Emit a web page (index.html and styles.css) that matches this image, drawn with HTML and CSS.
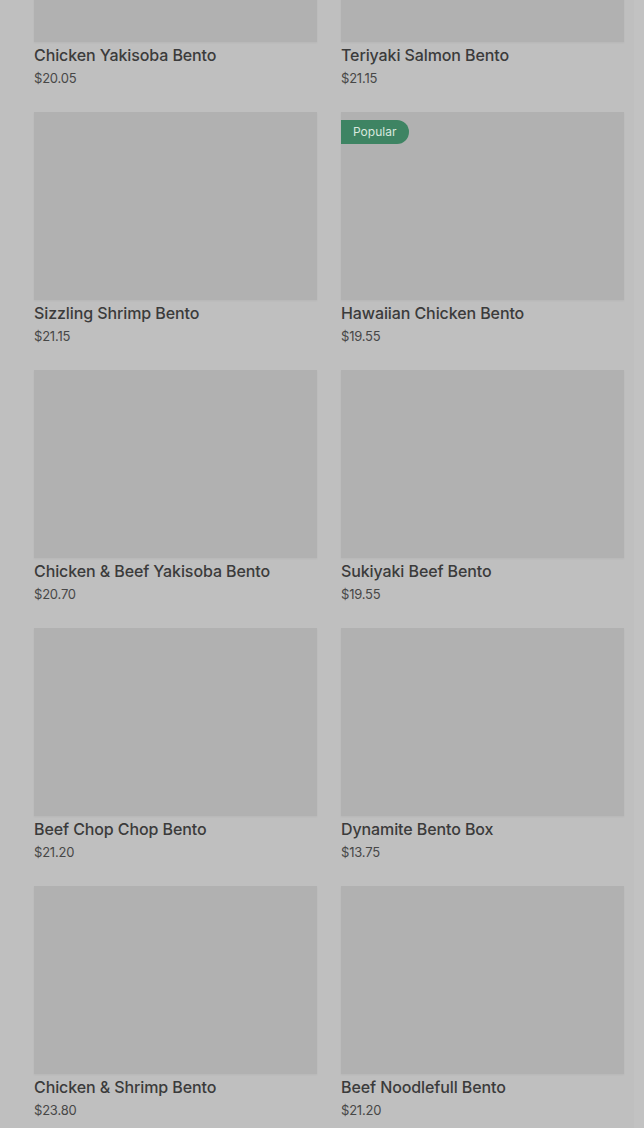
FILE: index.html
```html
<!DOCTYPE html>
<html lang="en">
<head>
  <meta charset="UTF-8">
  <meta name="viewport" content="width=device-width, initial-scale=1.0">
  <title>Bento Menu</title>
  <link rel="stylesheet" href="styles.css">
</head>
<body>
  <div class="overlay">
    <div class="menu-grid">
      <div class="item">
        <div class="thumb"></div>
        <div class="name">Chicken Yakisoba Bento</div>
        <div class="price">$20.05</div>
      </div>
      <div class="item">
        <div class="thumb"></div>
        <div class="name">Teriyaki Salmon Bento</div>
        <div class="price">$21.15</div>
      </div>
      <div class="item">
        <div class="thumb"></div>
        <div class="name">Sizzling Shrimp Bento</div>
        <div class="price">$21.15</div>
      </div>
      <div class="item">
        <div class="thumb"><span class="badge">Popular</span></div>
        <div class="name">Hawaiian Chicken Bento</div>
        <div class="price">$19.55</div>
      </div>
      <div class="item">
        <div class="thumb"></div>
        <div class="name">Chicken &amp; Beef Yakisoba Bento</div>
        <div class="price">$20.70</div>
      </div>
      <div class="item">
        <div class="thumb"></div>
        <div class="name">Sukiyaki Beef Bento</div>
        <div class="price">$19.55</div>
      </div>
      <div class="item">
        <div class="thumb"></div>
        <div class="name">Beef Chop Chop Bento</div>
        <div class="price">$21.20</div>
      </div>
      <div class="item">
        <div class="thumb"></div>
        <div class="name">Dynamite Bento Box</div>
        <div class="price">$13.75</div>
      </div>
      <div class="item">
        <div class="thumb"></div>
        <div class="name">Chicken &amp; Shrimp Bento</div>
        <div class="price">$23.80</div>
      </div>
      <div class="item">
        <div class="thumb"></div>
        <div class="name">Beef Noodlefull Bento</div>
        <div class="price">$21.20</div>
      </div>
    </div>
  </div>
</body>
</html>
```

FILE: styles.css
```css
html, body {
  margin: 0;
  padding: 0;
  background-color: #c2c2c2;
  font-family: Inter, Roboto, "Liberation Sans", sans-serif;
  overflow: hidden;
}
.overlay {
  width: 634px;
  height: 1128px;
  overflow: hidden;
  background-color: #bfbfbf;
}
.menu-grid {
  display: grid;
  grid-template-columns: 283px 283px;
  column-gap: 24px;
  row-gap: 25px;
  padding-left: 34px;
  margin-top: -146px;
}
.item {
  display: flex;
  flex-direction: column;
}
.thumb {
  position: relative;
  height: 188px;
  background-color: #b1b1b1;
  box-shadow: 0 1px 2px rgba(0, 0, 0, 0.05);
}
.badge {
  position: absolute;
  top: 8px;
  left: 0;
  height: 24px;
  line-height: 24px;
  padding: 0 13px 0 12px;
  background-color: #3e8463;
  color: #d9e8df;
  font-size: 12px;
  border-radius: 0 12px 12px 0;
}
.name {
  margin-top: 3px;
  font-size: 16px;
  line-height: 20px;
  font-weight: 500;
  color: #3b3b3b;
  letter-spacing: -0.1px;
}
.price {
  margin-top: 4px;
  font-size: 13px;
  line-height: 18px;
  color: #474747;
  letter-spacing: -0.2px;
}
```
